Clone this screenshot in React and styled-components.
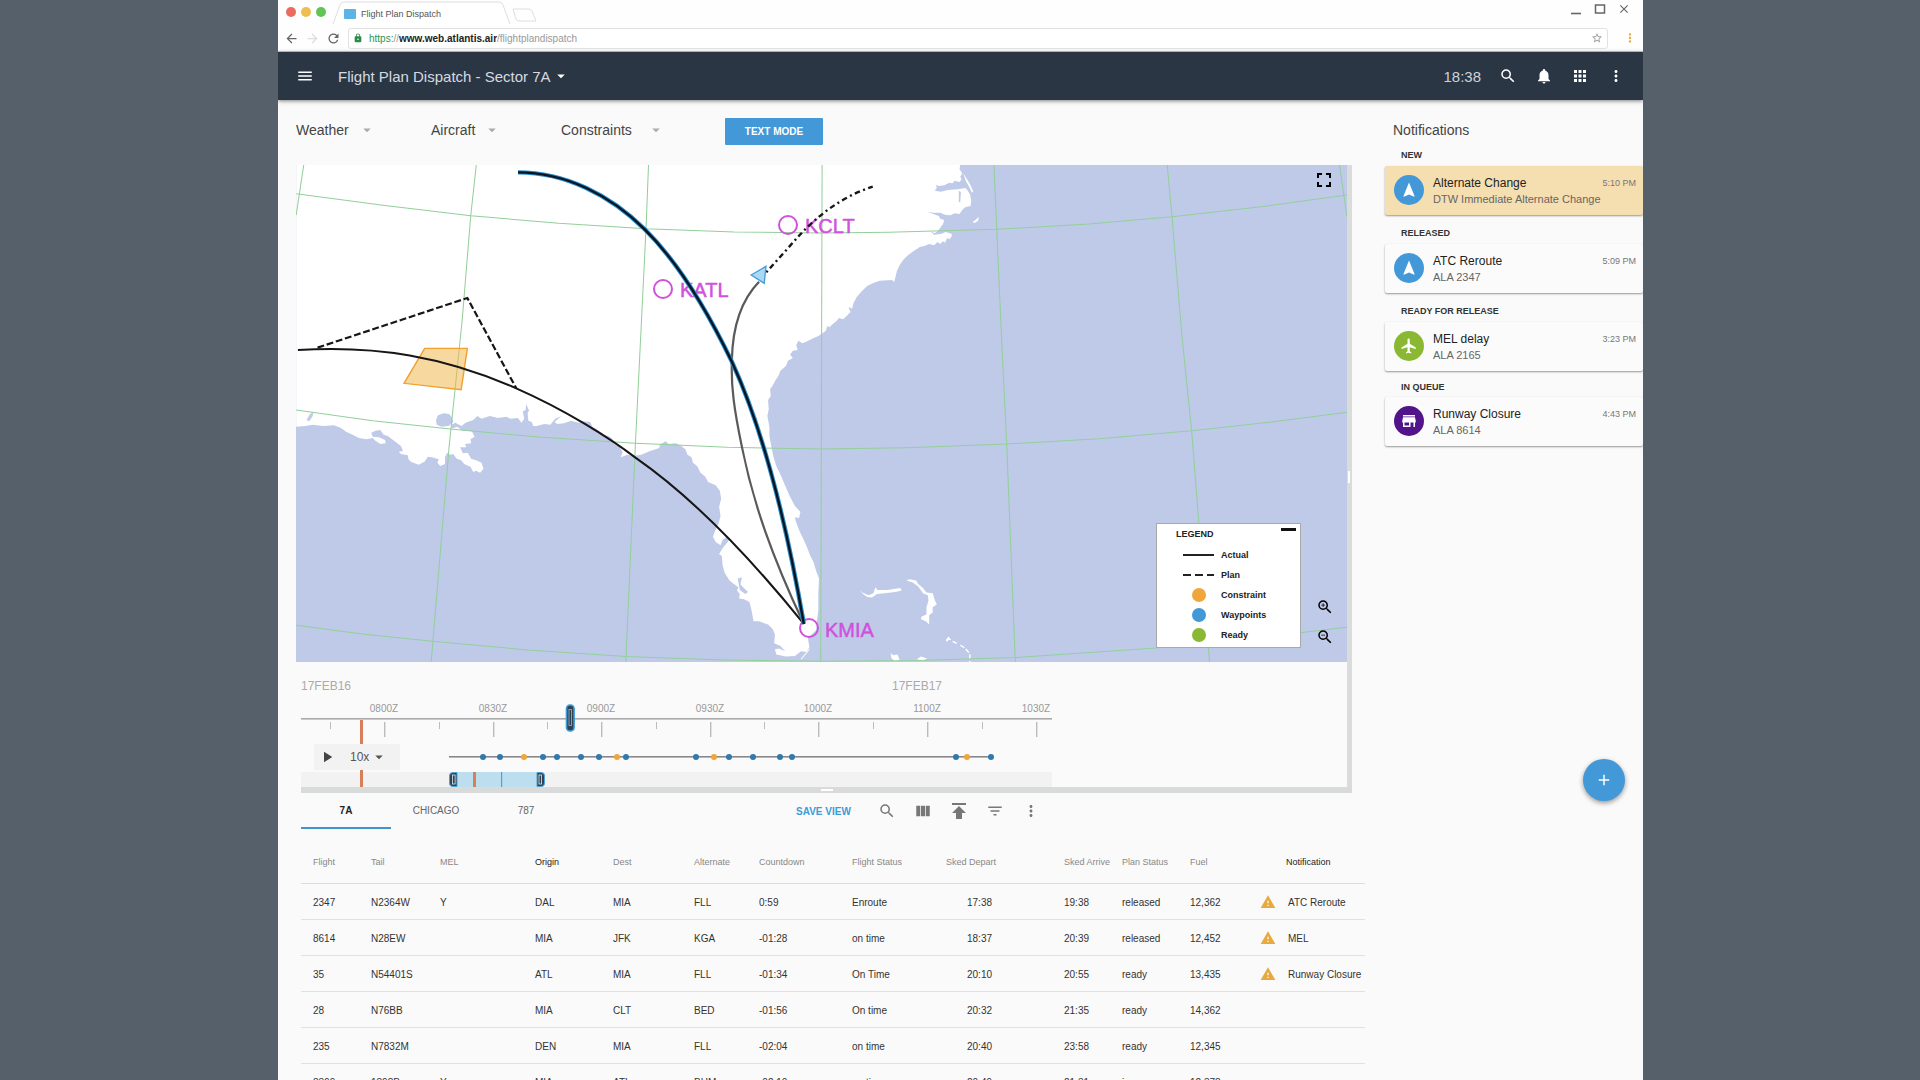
import React, {useState} from "react";
import styled, {createGlobalStyle, css} from "styled-components";
import {
    MdMenu, MdArrowDropDown, MdSearch, MdNotifications, MdApps, MdMoreVert, MdNavigation, MdFlight,
    MdStore, MdPublish, MdFilterList, MdViewColumn, MdWarning, MdPlayArrow, MdAdd, MdFullscreen,
    MdZoomIn, MdZoomOut, MdLock, MdStarBorder, MdArrowBack, MdArrowForward, MdRefresh, MdClose
} from "react-icons/md";


const GlobalStyle = createGlobalStyle`
* { box-sizing: border-box; }
body {
    margin: 0;
    background: #56606a;
    color: #333;
    font-family: "Liberation Sans", Arial, Helvetica, sans-serif;
}
button, select, input { font-family: inherit; }
a { color: inherit; text-decoration: none; }
`

const Desktop = styled.div`
height: 100vh;
padding: 0 277px 0 278px;
overflow: hidden;
`
const Browser = styled.div`
position: relative;
height: 100%;
overflow: hidden;
background: #fafafa;
`

const IconButton = styled.button`
display: flex;
align-items: center;
justify-content: center;
flex: none;
width: ${(p) => p.$size || 18}px;
height: ${(p) => p.$size || 18}px;
padding: 0;
border: 0;
background: none;
color: inherit;
font-size: ${(p) => p.$size || 18}px;
cursor: pointer;
svg { flex: none; }
`

/* browser chrome */
const Chrome = styled.div`
height: 52px;
background: #fefefe;
border-bottom: 1px solid #c9ccd0;
`
const TabStrip = styled.div`
display: flex;
align-items: center;
height: 24px;
padding: 0 12px 0 8px;
`
const Light = styled.span`
width: 10px;
height: 10px;
margin-right: 5px;
border-radius: 50%;
background: ${(p) => p.$color};
`
const TabShape = styled.svg`
position: absolute;
left: 0;
top: 0;
width: 100%;
height: 100%;
`
const PageTab = styled.div`
position: relative;
display: flex;
align-items: center;
gap: 5px;
width: 182px;
height: 24px;
margin: 0 -3px 0 1px;
padding: 4px 0 0 12px;
color: #555;
font-size: 9px;
`
const Favicon = styled.span`
z-index: 1;
width: 12px;
height: 10px;
border-radius: 1px;
background: #5cb3e4;
`
const TabName = styled.span`
z-index: 1;
`
const NewTab = styled.svg`
align-self: flex-end;
`
const WindowButtons = styled.div`
display: flex;
gap: 10px;
margin-left: auto;
padding-bottom: 6px;
color: #666;
`
const AddressRow = styled.div`
display: flex;
align-items: center;
gap: 6px;
height: 28px;
padding: 0 6px;
color: #666;
`
const Address = styled.div`
display: flex;
align-items: center;
flex: 1;
gap: 6px;
height: 21px;
margin: 0 9px 0 1px;
padding: 0 4px;
border: 1px solid #e2e2e2;
border-radius: 3px;
background: #fff;
color: #999;
font-size: 10px;
svg { flex: none; }
b { color: #222; }
em { color: #2c9455; font-style: normal; }
`
const Url = styled.span`
flex: 1;
`

/* application bar */
const AppBar = styled.header`
position: relative;
display: flex;
align-items: center;
gap: 18px;
height: 48px;
padding: 0 18px;
background: #2b3645;
box-shadow: 0 1px 4px rgba(0, 0, 0, 0.5);
color: #fff;
`
const AppTitle = styled.h1`
display: flex;
align-items: center;
gap: 1px;
flex: 1;
margin: 0;
padding-left: 6px;
color: #d5dbe0;
font-size: 15px;
font-weight: 300;
svg { color: #fff; }
`
const Clock = styled.span`
color: #ccd3d9;
font-size: 15px;
`

const Body = styled.div`
display: grid;
grid-template-columns: minmax(0, 1fr) 258px;
`
const Filters = styled.div`
display: flex;
align-items: center;
height: 65px;
padding: 0 0 2px 18px;
`
const FilterButton = styled.button`
display: flex;
align-items: center;
justify-content: space-between;
width: ${(p) => p.$width}px;
margin-right: ${(p) => p.$gap}px;
padding: 0 0 3px;
border: 0;
background: none;
color: #444;
font-size: 14px;
svg { color: #aaa; }
`
const TextMode = styled.button`
width: 98px;
height: 27px;
padding: 0;
border: 0;
border-radius: 1px;
background: #4398d8;
color: #fff;
font-size: 10px;
font-weight: 700;
`

const MapPanel = styled.section`
position: relative;
margin: 0 33px 0 18px;
border-right: 5px solid #d9dcdb;
`
const MapArea = styled.div`
position: relative;
line-height: 0;
`
const MapSvg = styled.svg`
display: block;
width: 100%;
height: auto;
background: #bfcae9;
`
const MapTools = styled.div`
position: absolute;
right: 13px;
${(p) => p.$top ? "top: 5px;" : "bottom: 16px;"}
display: flex;
flex-direction: column;
gap: 12px;
color: #000;
`
const SideHandle = styled.span`
position: absolute;
right: -3px;
top: 306px;
width: 2px;
height: 12px;
background: #fff;
`
const Legend = styled.div`
position: absolute;
right: 46px;
bottom: 14px;
width: 145px;
height: 125px;
padding: 4px 4px 0 19px;
border: 1px solid #a9a9a9;
background: #fff;
color: #222;
font-size: 9px;
font-weight: 700;
line-height: 12px;
`
const LegendHead = styled.div`
display: flex;
justify-content: space-between;
margin-bottom: 5px;
`
const Collapse = styled.button`
width: 15px;
height: 3px;
padding: 0;
border: 0;
background: #111;
`
const LegendList = styled.ul`
margin: 0;
padding: 0;
list-style: none;
`
const LegendItem = styled.li`
display: flex;
align-items: center;
height: 20px;
padding-left: 6px;
svg { margin-right: 7px; }
`

/* timeline */
const Timeline = styled.div`
position: relative;
height: 125px;
padding: 16px 0 0 5px;
`
const Dates = styled.div`
display: flex;
height: 22px;
color: #aaa;
font-size: 12px;
line-height: 16px;
span { flex: 0 0 591px; }
span + span { flex-basis: auto; }
`
const TimelineChart = styled.svg`
display: block;
width: 751px;
height: 87px;
`
const Player = styled.div`
position: absolute;
left: 18px;
top: 82px;
display: flex;
align-items: center;
gap: 14px;
width: 86px;
height: 26px;
padding-left: 4px;
background: #f2f2f2;
color: #444;
`
const Speed = styled.button`
display: flex;
align-items: center;
gap: 1px;
padding: 0;
border: 0;
background: none;
color: #555;
font-size: 12px;
`
const Divider = styled.div`
display: flex;
justify-content: center;
align-items: center;
height: 6px;
margin: 0 33px 0 23px;
background: #d9dbda;
&::after {
    content: "";
    width: 12px;
    height: 2px;
    background: #fff;
}
`

/* flight list */
const ListBar = styled.div`
display: flex;
align-items: center;
height: 36px;
margin-left: 23px;
color: #777;
`
const Tab = styled.button`
width: 90px;
height: 36px;
padding: 0;
border: 0;
border-bottom: 2px solid transparent;
background: none;
color: #666;
font-size: 10px;
${(p) => p.$active && css`
    border-bottom-color: #4193c9;
    color: #222;
    font-weight: 700;
`}
`
const ListTools = styled.div`
display: flex;
align-items: center;
gap: 18px;
margin-left: 225px;
`
const SaveView = styled.button`
width: 64px;
padding: 0;
border: 0;
background: none;
color: #3d9bd8;
font-size: 10px;
font-weight: 700;
text-align: left;
white-space: nowrap;
`
const Table = styled.table`
width: calc(100% - 43px);
margin: 0 20px 0 23px;
border-collapse: collapse;
table-layout: fixed;
white-space: nowrap;
`
const Th = styled.th`
height: 54px;
padding: 12px 0 0;
border-bottom: 1px solid #ddd;
color: ${(p) => p.$strong ? "#222" : "#888"};
font-size: 9px;
font-weight: 400;
text-align: left;
&:first-child { padding-left: 12px; }
`
const Td = styled.td`
height: 36px;
padding: 2px 0 0 ${(p) => p.$indent || 0}px;
border-bottom: 1px solid #e1e1e1;
color: #333;
font-size: 10px;
svg { display: block; }
&:first-child { padding-left: 12px; }
`

/* notifications */
const Aside = styled.aside`
padding-top: 21px;
`
const AsideTitle = styled.h2`
margin: 0 0 3px 8px;
color: #444;
font-size: 14px;
font-weight: 400;
line-height: 18px;
`
const GroupLabel = styled.h3`
height: 29px;
margin: 0;
padding: 12px 0 0 16px;
color: #333;
font-size: 9px;
font-weight: 700;
line-height: 12px;
&:first-of-type { height: 24px; padding-top: 7px; }
&:last-of-type { height: 26px; padding-top: 10px; }
`
const Card = styled.article`
display: flex;
height: 49px;
padding: 9px 7px 0 9px;
border-radius: 2px;
background: ${(p) => p.$fresh ? "#f5deb0" : "#fbfbfb"};
box-shadow: 0 1px 2px rgba(0, 0, 0, 0.4);
`
const Avatar = styled.span`
display: flex;
align-items: center;
justify-content: center;
width: 30px;
height: 30px;
margin-right: 9px;
border-radius: 50%;
background: ${(p) => p.$color};
color: #fff;
font-size: 18px;
`
const CardText = styled.div`
flex: 1;
color: #666;
font-size: 11px;
line-height: 16px;
white-space: nowrap;
strong {
    display: block;
    color: #222;
    font-size: 12px;
    font-weight: 400;
}
`
const Row = styled.div`
display: flex;
justify-content: space-between;
`
const Time = styled.time`
color: #777;
font-size: 9px;
`
const Fab = styled.button`
position: absolute;
right: 18px;
top: 759px;
display: flex;
align-items: center;
justify-content: center;
width: 42px;
height: 42px;
padding: 0;
border: 0;
border-radius: 50%;
background: #4398d8;
box-shadow: 0 2px 5px rgba(0, 0, 0, 0.4);
color: #fff;
font-size: 18px;
`


const LAND = `M18 14 L1946 14 1944 28 1952 40 1946 50 1950 58 1944 66 1930 62 1924 70 1914 68 1900 76 1884 78 1876 74 1878 84 1872 92 1890 95
1910 90 1940 88 1962 84 1968 92 1975 104 1978 122 1976 138 1960 142 1952 150 1944 162 1930 160 1918 166 1902 164 1888 158 1868 158 1850 155
1868 162 1884 168 1888 176 1900 180 1896 192 1890 200 1882 212 1872 220 1860 214 1870 224 1890 222 1904 216 1922 222 1920 232 1914 238 1908 234 1902 248 1896 244
1888 252 1880 246 1870 256 1856 252 1842 258 1830 260 1812 272 1796 284 1782 298 1770 316 1762 334 1758 352 1754 366 1748 360 1712 362 1692 370
1676 378 1660 394 1646 410 1636 430 1632 446 1622 440 1620 430 1624 448 1628 456 1616 468 1606 478 1594 474 1586 484 1576 492 1566 502 1560 498 1556 512
1546 520 1534 528 1516 536 1502 544 1488 550 1476 542 1470 556 1474 570 1460 572 1452 584 1460 594 1446 602 1440 618 1424 632 1418 648 1410 660 1402 676
1394 688 1396 708 1388 720 1390 748 1386 768 1392 800 1392 828 1398 862 1404 892 1412 918 1426 948 1438 978 1452 1010 1466 1038 1482 1056 1478 1074 1466 1072 1462 1050
1468 1082 1478 1110 1492 1140 1502 1164 1510 1186 1520 1206 1528 1234 1536 1256 1534 1300 1534 1350 1530 1384 1528 1410 1512 1426 1504 1436 1508 1462
1500 1476 1484 1474 1466 1488 1440 1490 1412 1484 1408 1468 1420 1466 1438 1474 1424 1458 1406 1450 1408 1424 1402 1408 1388 1394 1362 1384 1346 1384
1340 1350 1334 1326 1318 1318 1304 1316 1306 1302 1298 1292 1302 1282 1286 1270 1276 1262 1262 1238 1256 1214 1254 1188 1246 1182 1258 1162 1268 1150
1278 1136 1266 1132 1256 1140 1250 1156 1236 1146 1228 1130 1234 1114 1244 1092 1250 1068 1246 1040 1252 1016 1248 992 1236 976 1214 966 1206 950
1192 938 1182 918 1170 908 1166 892 1154 884 1148 868 1136 858 1120 850 1100 852 1090 844 1074 854 1072 864 1044 874 1020 884 996 888
980 884 960 892 966 876 956 860 940 852 936 836 924 828 908 824 894 810 878 800 872 786 850 784 838 788 816 782 796 790 776 792 768 786 788 768
770 776 756 794 738 792 716 798 706 798 702 786 692 782 690 758 694 752 686 732 684 750 676 754 680 776 672 788 662 774 640 776 628 770 604 774
580 768 556 776 544 768 532 780 510 788 498 798 480 788 468 794 470 806 486 800 500 812 528 814 536 830 524 838 526 850 508 852 512 862 494 862
502 880 516 878 526 896 544 902 556 908 562 926 552 938 540 932 532 936 524 920 506 912 496 900 484 896 474 882 464 884 456 878 450 892 450 912
436 918 428 908 432 898 412 892 400 890 392 904 374 914 352 906 344 898 342 886 322 882 316 876 328 872 322 858 304 844 284 828 272 824
262 810 248 812 236 818 240 830 258 832 276 840 278 850 262 852 248 842 240 834 222 838 200 834 182 824 164 816 148 804 128 796 96 798
66 794 44 798 18 800 Z`

const GRID = [
    "M40 14 L18 165",
    "M541 14 L525 165 500 480 462 860 410 1506",
    "M1041 14 L1034 200 1003 850 975 1506",
    "M1545 14 L1541 1506",
    "M2044 14 L2052 208 2069 600 2081 852 2106 1506",
    "M2547 14 L2561 170 2589 520 2618 812 2639 1090 2670 1506",
    "M3047 14 L3058 90 3069 170",
    "M18 101 L270 136 525 167 780 190 1034 206 1290 216 1545 219 1739 217 2052 208 2320 192 2561 170 2820 140 3069 105",
    "M18 750 L240 782 465 807 730 832 1003 850 1270 862 1541 867 1790 863 2081 852 2350 836 2618 812 2850 786 3069 757",
    "M18 1396 L210 1422 413 1444 690 1470 975 1490 1260 1500 1541 1504 1820 1502 2106 1493 2514 1464 2800 1434 3069 1402"
]

const ISLANDS = [
    "M1652 1288 L1662 1298 1680 1306 1694 1300 1700 1282 1706 1290 1734 1290 1772 1284 1776 1292 1758 1296 1726 1300 1704 1302 1690 1313 1676 1311 1664 1302 Z",
    "M1790 1262 L1798 1258 1818 1262 1824 1272 1838 1284 1848 1298 1866 1300 1872 1320 1878 1334 1866 1342 1866 1358 1856 1366 1856 1394 1846 1384 1832 1378 1834 1370 1848 1364 1848 1342 1854 1322 1852 1306 1838 1300 1824 1280 1808 1268 Z",
    "M1744 1480 L1752 1486 1764 1484 1770 1500 1756 1504 1746 1494 Z",
    "M1820 1498 L1832 1490 1850 1496 1838 1503 Z",
    "M1904 1440 L1912 1430 1920 1440 1912 1440 1908 1446 Z",
    "M1955 40 L1962 62 1972 80 1980 98 1984 94 1976 76 1966 58 Z",
    "M1982 186 L1990 180 2000 170 1998 182 1988 189 Z"
]

const LAKES = [
    "M424 780 L430 766 446 760 462 762 470 772 474 786 460 798 440 800 426 794 Z",
    "M48 780 L58 762 68 756 66 768 56 784 Z",
    "M1942 92 L1948 96 1946 128 1942 124 Z",
    "M1300 1256 L1312 1252 1308 1274 1318 1284 1330 1296 1322 1302 1306 1290 Z"
]

const AIRPORTS = [
    {code: "KCLT", cx: 492, cy: 60, x: 509, y: 68},
    {code: "KATL", cx: 367, cy: 124, x: 384, y: 132},
    {code: "KMIA", cx: 513, cy: 463, x: 529, y: 472}
]

const LEGEND = [
    {label: "Actual", line: ""},
    {label: "Plan", line: "8 4"},
    {label: "Constraint", color: "#efa63a"},
    {label: "Waypoints", color: "#4398d8"},
    {label: "Ready", color: "#8ab833"}
]

const RouteMap = () => {
    return <MapSvg viewBox="0 0 1051 497" role="img" aria-label="Route map">
        <g transform="translate(-6 -5) scale(0.3444 0.3333)" fill="none">
            <path d={LAND} fill="#fff"/>
            {ISLANDS.map((d) => <path key={d} d={d} fill="#fff"/>)}
            {LAKES.map((d) => <path key={d} d={d} fill="#bfcae9"/>)}
            <path d="M1924 1444 L1936 1450 M1946 1456 L1960 1464 1974 1482 1974 1506" stroke="#fff" strokeWidth="4" strokeDasharray="14 6"/>
            <path d="M1484 1498 L1508 1468" stroke="#fff" strokeWidth="3"/>
            {GRID.map((d) => <path key={d} d={d} stroke="#93cf9b" strokeWidth="3"/>)}
        </g>
        {AIRPORTS.map((a) => <g key={a.code}>
            <circle cx={a.cx} cy={a.cy} r="9" fill="none" stroke="#d052dc" strokeWidth="2"/>
            <text x={a.x} y={a.y} fill="#d052dc" stroke="#d052dc" strokeWidth="0.5" fontSize="20">{a.code}</text>
        </g>)}
        <g transform="translate(-6 -5) scale(0.3444 0.3333)" fill="none">
            <path d="M391 565 L515 565 497 689 331 670 Z" fill="#f1b850" fillOpacity="0.55" stroke="#f0a02c" strokeWidth="4"/>
            <path d="M23 570 C250 555 450 590 657 685 C800 750 930 835 1003 893 C1180 1020 1350 1210 1492 1392" stroke="#161616" strokeWidth="6"/>
            <path d="M80 563 L515 414 657 685" stroke="#161616" strokeWidth="6.5" strokeDasharray="20 8"/>
            <path d="M1492 1392 C1400 1190 1345 1030 1312 860 C1290 750 1280 680 1283 600 C1285 500 1310 420 1362 365" stroke="#5a5a5a" strokeWidth="6.5"/>
            <path d="M1383 337 L1480 225 C1530 170 1600 110 1692 80" stroke="#161616" strokeWidth="7" strokeDasharray="6 10 16 10"/>
            <path d="M662 37 C800 37 930 105 1030 208 C1130 310 1220 470 1283 605 C1370 800 1440 1080 1492 1392" stroke="#2a8cc8" strokeWidth="13"/>
            <path d="M662 37 C800 37 930 105 1030 208 C1130 310 1220 470 1283 605 C1370 800 1440 1080 1492 1392" stroke="#051523" strokeWidth="7"/>
            <path d="M1339 345 L1382 319 1377 370 Z" fill="#a9d9f5" stroke="#4a9fd4" strokeWidth="4"/>
        </g>
    </MapSvg>
}

const TICKS = ["0800Z", "0830Z", "0900Z", "0930Z", "1000Z", "1100Z", "1030Z"]
const WAYPOINTS = [182, 199, 223, 242, 256, 280, 298, 316, 325, 395, 413, 428, 452, 479, 491, 655, 666, 690]
const WARNED = [223, 316, 413, 666]

const TimelineScale = () => {
    return <TimelineChart viewBox="0 0 751 87" role="img" aria-label="Timeline">
        {TICKS.map((t, i) => {
            const x = Math.round(83 + i * 108.6)
            return <g key={t}>
                <text x={x} y="12" fontSize="10" textAnchor="middle" fill="#999">{t}</text>
                <rect x={x} y="22" width="1.4" height="15" fill="#bbb"/>
                <rect x={x - 54} y="22" width="1" height="7" fill="#bbb"/>
            </g>
        })}
        <rect x="0" y="18" width="751" height="1.6" fill="#aaa"/>
        <rect x="0" y="72" width="751" height="15" fill="#f2f2f2"/>
        <rect x="59" y="20" width="3" height="67" fill="#d67f58"/>
        <rect x="148" y="56" width="542" height="1.6" fill="#888"/>
        {WAYPOINTS.map((x) => <circle key={x} cx={x} cy="57" r="3" fill={WARNED.includes(x) ? "#efa63a" : "#3079ad"}/>)}
        <rect x="148" y="72" width="96" height="15" rx="4" fill="#bddeee"/>
        <rect x="172" y="72" width="3" height="15" fill="#d67f58"/>
        <rect x="200" y="72" width="1.2" height="15" fill="#4ba3da"/>
        <path d="M156 72.5 H152 Q148.5 72.5 148.5 76 V83 Q148.5 86.5 152 86.5 H156 Z" fill="#2f4352" stroke="#4ba3da"/>
        <rect x="151.5" y="75" width="2.6" height="9" fill="none" stroke="#dfeaf0" strokeWidth="0.8"/>
        <path d="M236 72.5 H240 Q243.5 72.5 243.5 76 V83 Q243.5 86.5 240 86.5 H236 Z" fill="#2f4352" stroke="#4ba3da"/>
        <rect x="238" y="75" width="2.6" height="9" fill="none" stroke="#dfeaf0" strokeWidth="0.8"/>
        <rect x="265.5" y="5" width="7.6" height="26" rx="3.5" fill="#2f4352" stroke="#3e9bd6" strokeWidth="1.6"/>
        <rect x="268" y="9.5" width="2.4" height="16" fill="none" stroke="#8fb9d2" strokeWidth="0.8"/>
    </TimelineChart>
}

const COLUMNS = [
    ["Flight", 70], ["Tail", 69], ["MEL", 95], ["Origin", 78], ["Dest", 81], ["Alternate", 65], ["Countdown", 93],
    ["Flight Status", 94], ["Sked Depart", 118], ["Sked Arrive", 58], ["Plan Status", 68], ["Fuel", 70], ["", 26], ["Notification", 79]
]
const FLIGHTS = [
    ["2347", "N2364W", "Y", "DAL", "MIA", "FLL", "0:59", "Enroute", "17:38", "19:38", "released", "12,362", "ATC Reroute"],
    ["8614", "N28EW", "", "MIA", "JFK", "KGA", "-01:28", "on time", "18:37", "20:39", "released", "12,452", "MEL"],
    ["35", "N54401S", "", "ATL", "MIA", "FLL", "-01:34", "On Time", "20:10", "20:55", "ready", "13,435", "Runway Closure"],
    ["28", "N76BB", "", "MIA", "CLT", "BED", "-01:56", "On time", "20:32", "21:35", "ready", "14,362", ""],
    ["235", "N7832M", "", "DEN", "MIA", "FLL", "-02:04", "on time", "20:40", "23:58", "ready", "12,345", ""],
    ["8369", "1898B", "Y", "MIA", "ATL", "BHM", "-02:10", "on time", "20:49", "21:31", "in queue", "12,378", ""]
]

const NOTIFICATIONS = [
    {group: "NEW", title: "Alternate Change", text: "DTW Immediate Alternate Change", time: "5:10 PM", color: "#4398d8", icon: MdNavigation, fresh: true},
    {group: "RELEASED", title: "ATC Reroute", text: "ALA 2347", time: "5:09 PM", color: "#4398d8", icon: MdNavigation},
    {group: "READY FOR RELEASE", title: "MEL delay", text: "ALA 2165", time: "3:23 PM", color: "#8ab833", icon: MdFlight},
    {group: "IN QUEUE", title: "Runway Closure", text: "ALA 8614", time: "4:43 PM", color: "#52148a", icon: MdStore}
]

const BrowserChrome = () => {
    return <Chrome>
        <TabStrip>
            <Light $color="#ec6a5e"/>
            <Light $color="#f0bd4f"/>
            <Light $color="#61c454"/>
            <PageTab>
                <TabShape viewBox="0 0 182 24">
                    <path d="M1 24 L8 5 Q9 2 12 2 H167 Q170 2 171 5 L178 24" fill="#fff" stroke="#dedede"/>
                </TabShape>
                <Favicon/>
                <TabName>Flight Plan Dispatch</TabName>
            </PageTab>
            <NewTab width="27" height="16" viewBox="0 0 27 16">
                <path d="M2 1 H18 Q20 1 21 3 L25 13 H8 Q6 13 5 11 Z" fill="none" stroke="#dedede"/>
            </NewTab>
            <WindowButtons>
                <IconButton $size={14} aria-label="Minimize"><svg width="12" height="12"><path d="M1 10.5 H11" stroke="currentColor" strokeWidth="1.6"/></svg></IconButton>
                <IconButton $size={14} aria-label="Maximize"><svg width="12" height="12"><rect x="1.5" y="2" width="9" height="8" fill="none" stroke="currentColor" strokeWidth="1.5"/></svg></IconButton>
                <IconButton $size={14} aria-label="Close"><MdClose/></IconButton>
            </WindowButtons>
        </TabStrip>
        <AddressRow>
            <IconButton $size={15} aria-label="Back"><MdArrowBack/></IconButton>
            <IconButton $size={15} aria-label="Forward"><MdArrowForward color="#ddd"/></IconButton>
            <IconButton $size={15} aria-label="Reload"><MdRefresh/></IconButton>
            <Address>
                <MdLock size={10} color="#2b8a45"/>
                <Url><em>https:</em>//<b>www.web.atlantis.air</b>/flightplandispatch</Url>
                <MdStarBorder size={12}/>
            </Address>
            <IconButton $size={14} aria-label="Browser menu"><MdMoreVert color="#e9a73b"/></IconButton>
        </AddressRow>
    </Chrome>
}

const App = () => {
    const [tab, setTab] = useState("7A");

    return <Desktop>
        <GlobalStyle/>
        <Browser>
            <BrowserChrome/>
            <AppBar>
                <IconButton aria-label="Menu"><MdMenu/></IconButton>
                <AppTitle>Flight Plan Dispatch - Sector 7A <MdArrowDropDown size={18}/></AppTitle>
                <Clock>18:38</Clock>
                <IconButton aria-label="Search"><MdSearch/></IconButton>
                <IconButton aria-label="Alerts"><MdNotifications/></IconButton>
                <IconButton aria-label="Apps"><MdApps/></IconButton>
                <IconButton aria-label="More"><MdMoreVert/></IconButton>
            </AppBar>
            <Body>
                <main>
                    <Filters>
                        <FilterButton $width={80} $gap={55}>Weather <MdArrowDropDown size={18}/></FilterButton>
                        <FilterButton $width={70} $gap={60}>Aircraft <MdArrowDropDown size={18}/></FilterButton>
                        <FilterButton $width={104} $gap={60}>Constraints <MdArrowDropDown size={18}/></FilterButton>
                        <TextMode>TEXT MODE</TextMode>
                    </Filters>
                    <MapPanel>
                        <MapArea>
                            <RouteMap/>
                            <MapTools $top>
                                <IconButton $size={20} aria-label="Full screen"><MdFullscreen size={24}/></IconButton>
                            </MapTools>
                            <Legend>
                                <LegendHead>LEGEND <Collapse aria-label="Collapse legend"/></LegendHead>
                                <LegendList>
                                    {LEGEND.map((l) => <LegendItem key={l.label}>
                                        <svg width="32" height="14">
                                            {l.color
                                                ? <circle cx="17" cy="7" r="7" fill={l.color}/>
                                                : <path d="M1 7 H32" stroke="#222" strokeWidth="2" strokeDasharray={l.line}/>}
                                        </svg>
                                        {l.label}
                                    </LegendItem>)}
                                </LegendList>
                            </Legend>
                            <MapTools>
                                <IconButton aria-label="Zoom in"><MdZoomIn/></IconButton>
                                <IconButton aria-label="Zoom out"><MdZoomOut/></IconButton>
                            </MapTools>
                        </MapArea>
                        <Timeline>
                            <Dates><span>17FEB16</span><span>17FEB17</span></Dates>
                            <TimelineScale/>
                            <Player>
                                <IconButton aria-label="Play"><MdPlayArrow/></IconButton>
                                <Speed>10x <MdArrowDropDown size={18}/></Speed>
                            </Player>
                        </Timeline>
                        <SideHandle/>
                    </MapPanel>
                    <Divider/>
                    <ListBar>
                        {["7A", "CHICAGO", "787"].map((t) => <Tab key={t} $active={t === tab} onClick={() => setTab(t)}>{t}</Tab>)}
                        <ListTools>
                            <SaveView>SAVE VIEW</SaveView>
                            <IconButton aria-label="Search flights"><MdSearch/></IconButton>
                            <IconButton aria-label="Columns"><MdViewColumn/></IconButton>
                            <IconButton aria-label="Export"><MdPublish size={24}/></IconButton>
                            <IconButton aria-label="Filter"><MdFilterList/></IconButton>
                            <IconButton aria-label="More actions"><MdMoreVert/></IconButton>
                        </ListTools>
                    </ListBar>
                    <Table>
                        <colgroup>
                            {COLUMNS.map(([label, width]) => <col key={label} width={width}/>)}
                        </colgroup>
                        <thead>
                            <tr>
                                {COLUMNS.map(([label]) => <Th key={label} $strong={label === "Origin" || label === "Notification"}>{label}</Th>)}
                            </tr>
                        </thead>
                        <tbody>
                            {FLIGHTS.map((f) => <tr key={f[0]}>
                                {f.slice(0, 12).map((v, i) => <Td key={i} $indent={i === 8 ? 21 : 0}>{v}</Td>)}
                                <Td>{f[12] && <MdWarning size={16} color="#e8a93f"/>}</Td>
                                <Td $indent={2}>{f[12]}</Td>
                            </tr>)}
                        </tbody>
                    </Table>
                </main>
                <Aside>
                    <AsideTitle>Notifications</AsideTitle>
                    {NOTIFICATIONS.map((n) => <React.Fragment key={n.group}>
                        <GroupLabel>{n.group}</GroupLabel>
                        <Card $fresh={n.fresh}>
                            <Avatar $color={n.color}><n.icon/></Avatar>
                            <CardText>
                                <Row><strong>{n.title}</strong><Time>{n.time}</Time></Row>
                                {n.text}
                            </CardText>
                        </Card>
                    </React.Fragment>)}
                </Aside>
            </Body>
            <Fab aria-label="Add"><MdAdd/></Fab>
        </Browser>
    </Desktop>
}


export default App;
